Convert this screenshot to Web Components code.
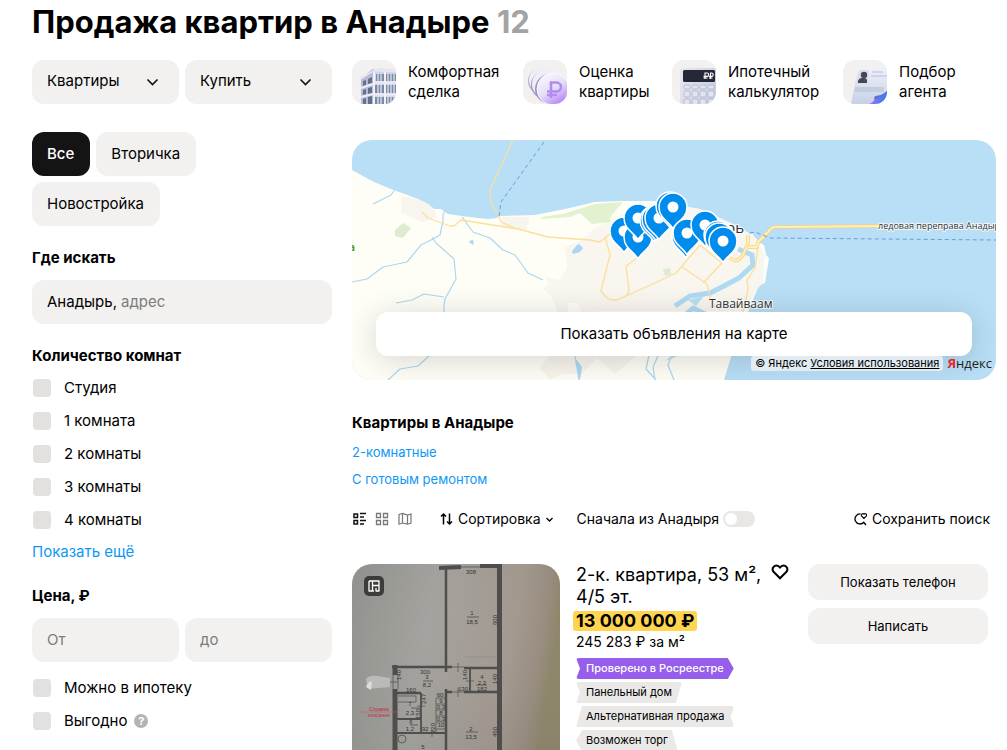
<!DOCTYPE html>
<html lang="ru">
<head>
<meta charset="utf-8">
<meta name="viewport" content="width=device-width, initial-scale=1">
<title>Продажа квартир в Анадыре</title>
<style>
  html, body {
    margin: 0;
    height: 100%;
    overflow: hidden;
    background: #fff;
  }
  body {
    --pill: #f2f1f0;
    --link: #0e98f5;
    --muted: #7c7c7c;
    color: #000;
    font: 15px/20px Inter, "Liberation Sans", sans-serif;
  }
</style>
</head>
<body>
<listing-page count="12">
  <span slot="title">Продажа квартир в Анадыре</span>
  <filter-panel slot="filters"></filter-panel>
  <service-link slot="services" icon="house">Комфортная сделка</service-link>
  <service-link slot="services" icon="coins">Оценка квартиры</service-link>
  <service-link slot="services" icon="calc">Ипотечный калькулятор</service-link>
  <service-link slot="services" icon="agent">Подбор агента</service-link>
  <map-preview>Показать объявления на карте</map-preview>
  <quick-links heading="Квартиры в Анадыре">
    <a href="#2k">2-комнатные</a>
    <a href="#remont">С готовым ремонтом</a>
  </quick-links>
  <results-toolbar></results-toolbar>
  <offer-card>
    <floor-plan slot="photo"></floor-plan>
    <span slot="title">2-к. квартира, 53&nbsp;м², 4/5&nbsp;эт.</span>
    <span slot="price">13&nbsp;000&nbsp;000&nbsp;₽</span>
    <span slot="unit">245&nbsp;283 ₽ за м²</span>
    <offer-tag slot="tags" shape="arrow">Проверено в Росреестре</offer-tag>
    <offer-tag slot="tags" shape="slant">Панельный дом</offer-tag>
    <offer-tag slot="tags" shape="ribbon">Альтернативная продажа</offer-tag>
    <offer-tag slot="tags" shape="point">Возможен торг</offer-tag>
  </offer-card>
</listing-page>

<script>
'use strict';

/** Styles that every shadow root starts with */
const BASE = `
  * { box-sizing: border-box; }
  button, input, select {
    margin: 0;
    padding: 0;
    border: 0;
    background: none;
    color: inherit;
    font: inherit;
  }
  button, select { cursor: pointer; }
  svg { display: block; flex: none; }
  a { color: inherit; text-decoration: none; }
`;

/**
 * Base class: opens the shadow root and renders once
 */
class UiElement extends HTMLElement {
  constructor() {
    super();
    this.root = this.attachShadow({mode: 'open'});
  }
  connectedCallback() {
    if (this.root.childNodes.length) return;
    this.root.innerHTML = `<style>${BASE}${this.styles}</style>${this.template}`;
  }
}

/**
 * Page frame: title, filters column, main column
 */
customElements.define('listing-page', class extends UiElement {
  get styles() {
    return `
      :host { display: block; padding: 2px 11px 0 32px; }
      h1 { margin: 0 0 18px; font-size: 31px; line-height: 40px; font-weight: 700; }
      h1 small { color: #a3a3a3; font-size: inherit; }
      .layout { display: grid; grid-template-columns: 300px minmax(0, 1fr); gap: 20px; align-items: start; }
      .services { display: grid; grid-template-columns: 171fr 149fr 171fr 153fr; margin-bottom: 36px; }
    `;
  }
  get template() {
    return `
      <h1><slot name="title"></slot> <small>${this.getAttribute('count')}</small></h1>
      <div class="layout">
        <aside><slot name="filters"></slot></aside>
        <main>
          <nav class="services"><slot name="services"></slot></nav>
          <slot></slot>
        </main>
      </div>`;
  }
});

/**
 * Drop-down in a rounded grey box
 */
customElements.define('pill-select', class extends UiElement {
  get styles() {
    return `
      :host { display: grid; flex: 1; min-width: 0; align-items: center; }
      select, svg { grid-area: 1 / 1; }
      select {
        height: 44px;
        padding: 0 40px 2px 15px;
        border-radius: 12px;
        background: var(--pill);
        appearance: none;
      }
      svg { justify-self: end; margin-right: 20px; pointer-events: none; }
    `;
  }
  get template() {
    const options = this.getAttribute('options').split(',');
    return `
      <select aria-label="${this.getAttribute('label')}">
        ${options.map(text => `<option>${text}</option>`).join('')}
      </select>
      <svg width="13" height="8" viewBox="0 0 13 8" fill="none" stroke="#111" stroke-width="1.6">
        <path d="M1.5 1.5l5 5 5-5"/>
      </svg>`;
  }
});

/**
 * Tick box with its label
 */
customElements.define('filter-check', class extends UiElement {
  get styles() {
    return `
      :host { display: flex; align-items: center; gap: 7px; }
      label { display: flex; align-items: center; gap: 13px; line-height: 24px; }
      input { width: 18px; height: 18px; margin-left: 1px; border-radius: 4px; background: #e2e1e0; appearance: none; }
      input:checked { background: var(--link); }
    `;
  }
  get template() {
    return `<label><input type="checkbox"><span><slot></slot></span></label><slot name="hint"></slot>`;
  }
});

/**
 * Left column with all the filters
 */
customElements.define('filter-panel', class extends UiElement {
  get styles() {
    return `
      :host { display: flex; flex-direction: column; gap: 20px; }
      .row { display: flex; flex-wrap: wrap; gap: 6px; }
      .kinds { margin: 8px 60px 0 0; }
      .kinds button { height: 44px; padding: 0 16px 0 15px; border-radius: 12px; background: var(--pill); }
      .kinds button[aria-pressed=true] { background: #141414; color: #fff; font-weight: 500; }
      h2, .title { display: block; margin: 0 0 10px; font-size: 15px; line-height: 24px; font-weight: 700; }
      .rooms .title { margin-bottom: 8px; }
      .field {
        display: flex;
        align-items: center;
        flex: 1;
        gap: 4px;
        min-width: 0;
        height: 44px;
        padding: 0 15px;
        border-radius: 12px;
        background: var(--pill);
      }
      .field input { flex: 1; min-width: 0; outline: 0; }
      ::placeholder { color: var(--muted); opacity: 1; }
      .checks { display: grid; gap: 9px; }
      .more { display: block; margin-top: 8px; color: var(--link); line-height: 24px; }
      .price .checks { margin-top: 14px; }
      .hint {
        width: 14px;
        height: 14px;
        border-radius: 50%;
        background: #b4b4b4;
        color: #fff;
        font-size: 11px;
        line-height: 14px;
        font-weight: 700;
      }
    `;
  }
  get template() {
    return `
      <div class="row">
        <pill-select label="Тип недвижимости" options="Квартиры,Комнаты,Дома"></pill-select>
        <pill-select label="Тип сделки" options="Купить,Снять"></pill-select>
      </div>
      <div class="row kinds">
        <button type="button" aria-pressed="true">Все</button>
        <button type="button" aria-pressed="false">Вторичка</button>
        <button type="button" aria-pressed="false">Новостройка</button>
      </div>
      <section>
        <label class="title" for="place">Где искать</label>
        <div class="field"><span>Анадырь,</span><input id="place" placeholder="адрес"></div>
      </section>
      <section class="rooms">
        <h2 class="title">Количество комнат</h2>
        <div class="checks">
          <filter-check>Студия</filter-check>
          <filter-check>1 комната</filter-check>
          <filter-check>2 комнаты</filter-check>
          <filter-check>3 комнаты</filter-check>
          <filter-check>4 комнаты</filter-check>
        </div>
        <a class="more" href="#more">Показать ещё</a>
      </section>
      <section class="price">
        <h2>Цена, ₽</h2>
        <div class="row">
          <div class="field"><input aria-label="Цена от" placeholder="От"></div>
          <div class="field"><input aria-label="Цена до" placeholder="до"></div>
        </div>
        <div class="checks">
          <filter-check>Можно в ипотеку</filter-check>
          <filter-check>Выгодно<button slot="hint" class="hint" type="button">?</button></filter-check>
        </div>
      </section>`;
  }
});

/** Pictures of the service tiles, 44x44 */
const SERVICE_ICONS = {
  house: `
    <defs><linearGradient id="h" x1="0" x2="1"><stop stop-color="#d6d4ea"/><stop offset="1" stop-color="#c8d3e8"/></linearGradient></defs>
    <path d="M9 18l12-9 23 3v32H9z" fill="url(#h)"/>
    <path d="M9 18l12-9v35H9z" fill="#b9bbd6"/>
    <path d="M8 17l19-9.500 17 2v3l-22-1-13 8z" fill="#e6e5f1"/>
    <path d="M11 21l3-1v5l-3 1zm5-2l4-2v6l-4 1zM11 30l3-1v5l-3 1zm5-2l4-1v6l-4 1zM11 39l3-1v6h-3zm5-2l4-1v8h-4z" fill="#62718c"/>
    <path d="M24 14h8v7h-8zm10 0h10v7H34zM23 25h9v8h-9zm11 0h10v8H34zM23 37h9v7h-9zm11 0h10v7H34z" fill="#7b8ba4"/>
    <path d="M26 14v30M29 14v30M36 14v30M39 14v30M42 14v30" stroke="#dfe3ef" stroke-width="1.300"/>
    <path d="M22 12v32M33 12v32" stroke="#f1f1f8" stroke-width="2"/>
    <path d="M21 22.500h23M21 34.500h23M9 28l12-4M9 37l12-3" stroke="#eeedf7" stroke-width="2.200"/>`,
  coins: `
    <defs><linearGradient id="c" x1="0" y1="0" x2=".6" y2="1"><stop stop-color="#fff"/><stop offset=".6" stop-color="#e4dcf6"/><stop offset="1" stop-color="#b98af5"/></linearGradient></defs>
    <circle cx="18" cy="21" r="13" fill="#b9add3"/>
    <circle cx="19" cy="20" r="13" fill="#efedf6"/>
    <circle cx="22" cy="25" r="14" fill="#a497c6"/>
    <circle cx="23" cy="24" r="14" fill="#efedf6"/>
    <circle cx="27" cy="29" r="15" fill="#9d8bc4"/>
    <circle cx="30" cy="29" r="16" fill="url(#c)" stroke="#faf8ff"/>
    <path d="M28 38V22.500h5.500a4.500 4.500 0 0 1 0 9H24M24 35h10" fill="none" stroke="#b38bef" stroke-width="2.600"/>`,
  calc: `
    <defs><linearGradient id="k" x1="0" y1="0" x2="1" y2=".5"><stop stop-color="#e9e9f3"/><stop offset="1" stop-color="#c4cce5"/></linearGradient></defs>
    <rect x="8" y="8" width="40" height="42" rx="3" fill="url(#k)"/>
    <rect x="11" y="10" width="32" height="12" rx="1.500" fill="#252735"/>
    <path d="M33 19v-6h2a1.700 1.700 0 0 1 0 3.400h-3.500M31.500 18h4M38.500 19v-6h1a1.700 1.700 0 0 1 0 3.400H37M37 18h3.500" fill="none" stroke="#fff" stroke-width="1.100"/>
    <g fill="#e3e4ef" stroke="#b0b3ca" stroke-width=".8">
      <rect x="12" y="25" width="6" height="4" rx="1.500"/><rect x="20" y="25" width="6" height="4" rx="1.500"/><rect x="28" y="25" width="6" height="4" rx="1.500"/><rect x="36" y="25" width="6" height="4" rx="1.500"/>
      <rect x="12" y="31" width="6" height="6" rx="1.500"/><rect x="20" y="31" width="6" height="6" rx="1.500"/><rect x="28" y="31" width="6" height="6" rx="1.500"/><rect x="36" y="31" width="6" height="6" rx="1.500"/>
      <rect x="12" y="39" width="6" height="6" rx="1.500"/><rect x="20" y="39" width="6" height="6" rx="1.500"/><rect x="28" y="39" width="6" height="6" rx="1.500"/><rect x="36" y="39" width="6" height="6" rx="1.500"/>
    </g>`,
  agent: `
    <defs>
      <linearGradient id="a" x1="0" y1="0" x2="0" y2="1"><stop stop-color="#f0f1f8"/><stop offset="1" stop-color="#c7d0e8"/></linearGradient>
      <linearGradient id="b" x1="0" x2="1"><stop stop-color="#a374f5"/><stop offset="1" stop-color="#2f7fe0"/></linearGradient>
    </defs>
    <path d="M15 8h30v36H8z" fill="url(#a)"/>
    <path d="M16 10h10l-1.500 14H13z" fill="#dcddea"/>
    <circle cx="21" cy="15" r="3.200" fill="#454858"/>
    <path d="M15 23v-2q1-3 4-3h2q3 0 3 3v2z" fill="#454858"/>
    <path d="M29 12h11M28 16h16" stroke="#c6cce2" stroke-width="1.600"/>
    <path d="M12 27h29l-.5 5H11z" fill="#c2cde0"/>
    <path d="M44 31v13H26q6-2 6-8 7 0 12-5z" fill="url(#b)"/>
    <path d="M32 36q7 0 12-5v2q-6 6-13 6z" fill="#5b73e0"/>`
};

/**
 * Picture tile with a two-line caption
 */
customElements.define('service-link', class extends UiElement {
  get styles() {
    return `
      :host { display: block; }
      a { display: flex; align-items: center; gap: 12px; }
      svg { border-radius: 12px; background: var(--pill); }
      span { width: min-content; }
    `;
  }
  get template() {
    return `
      <a href="#service">
        <svg width="44" height="44" viewBox="0 0 44 44">${SERVICE_ICONS[this.getAttribute('icon')]}</svg>
        <span><slot></slot></span>
      </a>`;
  }
});

/** Centres of the pins, in drawing order */
const PINS = [
  [272, 91], [286, 97], [286, 78], [302, 80], [304, 79], [307, 78], [318, 66], [321, 67],
  [334, 96], [335, 93], [353, 85], [366, 95], [367, 97], [371, 101]
];

/**
 * Map with pins and the wide button over it
 */
customElements.define('map-preview', class extends UiElement {
  get styles() {
    return `
      :host { display: block; position: relative; height: 240px; border-radius: 20px; overflow: hidden; background: #b8dff6; }
      svg { width: 100%; height: 100%; }
      text { font-family: "Open Sans", sans-serif; fill: #333; stroke: #fff; stroke-width: 2px; stroke-opacity: .8; paint-order: stroke; }
      button {
        position: absolute;
        left: 24px;
        right: 24px;
        bottom: 24px;
        height: 44px;
        border-radius: 12px;
        background: #fff;
        box-shadow: 0 4px 32px rgba(0, 0, 0, .16);
      }
      .copyright { position: absolute; right: 4px; bottom: 9px; display: flex; align-items: center; gap: 4px; }
      .terms { padding: 0 4px; border-radius: 3px; background: rgba(235, 240, 245, .85); font-size: 11px; line-height: 15px; }
      .terms a { text-decoration: underline; }
      .logo { font: 13px/15px "Open Sans", sans-serif; color: #222; }
      .logo b { color: #e5252b; }
    `;
  }
  get template() {
    const pins = PINS.map(([x, y]) => `<use href="#pin" x="${x}" y="${y}"/>`).join('');
    return `
      <svg viewBox="0 0 644 240" preserveAspectRatio="xMidYMid slice" fill="none" stroke-linejoin="round">
        <defs>
          <g id="pin">
            <path d="M0 22C-3 15-14 12-14 0a14 14 0 1 1 28 0C14 12 3 15 0 22z" fill="#008cec" stroke="#fff" stroke-width="1.500"/>
            <circle r="5.500" fill="#fff"/>
          </g>
        </defs>
        <path d="M0 30l20 11 21 9 12 4 13 5 10 5 6 5h7l7 5 14 2 16 2 10 1 9-1 2-2 36-1 30-6 30-7 27-1h33l45 8 38 18 11 10 3-4 6 9 6 3 2 10 3 3-4 25-6 2-11 27-17 45-7 23H0z" fill="#fefef6"/>
        <path d="M50 56l16 3 10 5 6 5 3 8-14 5-22-9zM150 77h28l-4 14-24-4z" fill="#f8f4ee"/>
        <path d="M213 107l17-7 10-10 30-16 35-10 43 5 40 18 17 12 8 16-2 28-8 8-10 20H205l-5-14-9-8 6-5-4-7 14 3 8-12z" fill="#f9f5ef"/>
        <path d="M205 170l90 4-4 36-28 24-18-16-15 16h-20l-12 6-10-12 12-16z" fill="#f6f2eb" opacity=".8"/>
        <path d="M217 163h9l5 14h-16z" fill="#fefef6"/>
        <path d="M189 77l22-3 32-10 28-2-12 14-1 6-18 2-12-11-10 4-28 2z" fill="#e2f2cf"/>
        <path d="M43 90l8-7 8 5-8 10-8-2zM311 129l7-1 1 7-6 1z" fill="#deebd0"/>
        <g stroke="#abd7f1" stroke-width="1.200">
          <path d="M21 64l18-9 3-4M0 142l15-3 16-12 24-5 14-17 12-6 7-4 3-14 0-7 4-5"/>
          <path d="M80 97l4 6 18 16 2 20-11 20-1 7v20M44 163l16-3 12-6 20 3M110 77l11 15 17 6 13 12 12 5 13 18 15 7M36 240l12-11 18-3 12-11M223 216l4 24M297 215l-3 14 10 11M306 216l-5 11 2 13M320 215l-4 10 6 15"/>
        </g>
        <path d="M220 111l5-6 2-1 4 4-3 4-7 2zM117 101l4-1 1 5-4-2zM223 218l7 9-2 14z" fill="#a9d7f3"/>
        <path d="M386 109l14 6 1 10-14 13-17 9-12 6-20 3-15 10M323 185l18-17 12 6-16 12" stroke="#aedaf4" stroke-width="5"/>
        <path d="M336 160l16-4-8 10zM328 215l-15 6 10-8z" fill="#b8dff6"/>
        <g stroke="#fbdf9c" stroke-width="1.300">
          <path d="M161 0l-23 50 1 13 8 13 2 6 16 7M70 72l6 6 22 8h4l7-6 57 9 30 8 42 3 10 2 5-4 8-7"/>
          <path d="M253 97l5 18-9 36 6 7 5 2h5l40-18 19-9 24-28 22 18-19 20M285 118l-11 8 3 24-2 5M330 127l25 17 3 14 5 9M320 94l8 3M406 107l-3 21-8 12 1 10-5 22"/>
        </g>
        <path d="M378 118q7 6 13-3l5-12v-8M396 107h9l1-5 14-14q3-2 10-1l100-1" stroke="#f5d27e" stroke-width="3.500"/>
        <path d="M378 118q7 6 13-3l5-12v-8M396 107h9l1-5 14-14q3-2 10-1l100-1" stroke="#fff0b5" stroke-width="2"/>
        <path d="M192 2l-43 60-2 14M398 93l5-1 15 6 226 2" stroke="#689cdc" stroke-width="1" stroke-dasharray="4 3"/>
        <text x="374" y="93" font-size="15">рь</text>
        <text x="357" y="168" font-size="12">Тавайваам</text>
        <text x="526" y="89" font-size="9">ледовая переправа Анадырь</text>
        <text x="-3" y="111" font-size="10" font-weight="700" style="fill:#4c9a26">а</text>
        ${pins}
      </svg>
      <button type="button"><slot></slot></button>
      <div class="copyright">
        <span class="terms">© Яндекс <a href="#terms">Условия использования</a></span>
        <span class="logo"><b>Я</b>ндекс</span>
      </div>`;
  }
});

/**
 * Heading with a short list of links
 */
customElements.define('quick-links', class extends UiElement {
  get styles() {
    return `
      :host { display: block; margin-top: 32px; }
      h2 { margin: 0 0 8px; font-size: 15px; line-height: 22px; font-weight: 700; }
      div { display: flex; flex-direction: column; align-items: flex-start; gap: 7px; font-size: 13px; }
      ::slotted(a) { color: var(--link); text-decoration: none; }
    `;
  }
  get template() {
    return `<h2>${this.getAttribute('heading')}</h2><div><slot></slot></div>`;
  }
});

/**
 * View switch, sorting and saved search
 */
customElements.define('results-toolbar', class extends UiElement {
  get styles() {
    return `
      :host { display: flex; align-items: center; margin-top: 20px; padding-right: 6px; height: 20px; white-space: nowrap; }
      button { display: flex; align-items: center; gap: 5px; }
      .views { display: flex; gap: 9px; margin-right: 28px; }
      .views button { color: #777; }
      .views button[aria-pressed=true] { color: #111; }
      label { display: flex; align-items: center; gap: 4px; margin-left: 24px; font-size: 14px; }
      .sort, .save { font-size: 14px; }
      .save { margin-left: auto; }
      input { display: flex; width: 32px; height: 16px; padding: 2px; border-radius: 8px; background: #e8e7e6; appearance: none; }
      input::before { content: ""; width: 12px; height: 12px; border-radius: 50%; background: #fff; }
      input:checked { justify-content: flex-end; background: var(--link); }
    `;
  }
  get template() {
    return `
      <div class="views">
        <button type="button" aria-pressed="true" aria-label="Списком">
          <svg width="14" height="14" viewBox="0 0 14 14" fill="none" stroke="currentColor" stroke-width="1.500">
            <path d="M2 2h3.500v3.500H2zM2 8.500h3.500V12H2zM8 1.500h6M8 5h4M8 8.500h6M8 12h4"/>
          </svg>
        </button>
        <button type="button" aria-pressed="false" aria-label="Плиткой">
          <svg width="14" height="14" viewBox="0 0 14 14" fill="none" stroke="currentColor" stroke-width="1.300">
            <path d="M1.500 1.500h4v4h-4zM8.500 1.500h4v4h-4zM1.500 8.500h4v4h-4zM8.500 8.500h4v4h-4z"/>
          </svg>
        </button>
        <button type="button" aria-pressed="false" aria-label="На карте">
          <svg width="14" height="14" viewBox="0 0 14 14" fill="none" stroke="currentColor" stroke-width="1.200">
            <path d="M1 2.500l3.500-1 5 1.500 3.500-1v9l-3.500 1.200L4.500 11 1 12.200zM4.500 1.500V11M9.500 3v9"/>
          </svg>
        </button>
      </div>
      <button class="sort" type="button">
        <svg width="13" height="14" viewBox="0 0 13 14" fill="none" stroke="#000" stroke-width="1.500">
          <path d="M3.500 12.500V2M1 4.500L3.500 2 6 4.500M9.500 1.500V12M7 9.500l2.500 2.500 2.500-2.500"/>
        </svg>
        Сортировка
        <svg width="7" height="5" viewBox="0 0 7 5" fill="none" stroke="#000" stroke-width="1.300"><path d="M.5 1l3 3 3-3"/></svg>
      </button>
      <label>Сначала из Анадыря <input type="checkbox" role="switch"></label>
      <button class="save" type="button">
        <svg width="13" height="14" viewBox="0 0 13 14" fill="none" stroke="#000" stroke-width="1.300">
          <path d="M6.500 2a5 5 0 1 0 3.500 8M9.500 10l2.500 3"/>
          <path d="M10 6.500L7.800 4.200a1.300 1.300 0 0 1 2.200-2 1.300 1.300 0 0 1 2.200 2z" stroke-width="1.100"/>
        </svg>
        Сохранить поиск
      </button>`;
  }
});

/**
 * Photographed floor plan
 */
customElements.define('floor-plan', class extends UiElement {
  get styles() {
    return `
      :host { display: block; }
      svg { width: 100%; }
      text { font: 6px "Liberation Sans", sans-serif; fill: #333; text-anchor: middle; }
      .red { font-size: 5px; fill: #c03048; }
    `;
  }
  get template() {
    return `
      <svg viewBox="0 0 208 260">
        <defs>
          <linearGradient id="paper" x1="0" y1="0" x2="1" y2=".2">
            <stop stop-color="#8f918c"/><stop offset=".4" stop-color="#a3a19d"/><stop offset=".8" stop-color="#a1978d"/><stop offset=".93" stop-color="#978b7e"/><stop offset="1" stop-color="#8c8467"/>
          </linearGradient>
          <linearGradient id="shade" x1="0" y1="0" x2="0" y2="1">
            <stop stop-color="#fff" stop-opacity="0"/><stop offset="1" stop-color="#444" stop-opacity=".15"/>
          </linearGradient>
        </defs>
        <path d="M0 0h208v260H0z" fill="url(#paper)"/>
        <path d="M0 0h208v260H0z" fill="url(#shade)"/>
        <g fill="none" stroke="#4f4e4c">
          <path d="M147.500 0v260M43 101v10M43 125v135" stroke-width="5"/>
          <path d="M87 4l22-1M128 2h22" stroke-width="4"/>
          <path d="M94 4v104M40 103h60M112 104h34M95 128h5M112 128h34M94 125v135M45 129h24" stroke-width="2.500"/>
          <path d="M118 104v24M69 129v26M45 155h24v14M45 169h49" stroke-width="1.800"/>
          <path d="M100 103h12M100 128h12M106 99v9M106 124v9M41 111v14M46 111v14M38 118h8M109 3h19M114 117h8M84 134h10M84 140h10M84 146h10M84 152h10M84 158h10M84 165h10M84 134v35M46 132h18v6H46M65 142h8M80 165v8" stroke-width=".7"/>
          <circle cx="50" cy="175" r="4" stroke-width=".8"/>
          <path d="M115 53h12M71 117h10M124 121h11M59 144h10M58 161h8M114 168h12" stroke-width=".8"/>
          <path d="M113 93h31" stroke="#8b8782" stroke-width=".6"/>
        </g>
        <path d="M14 115q3-4 12-3l12 2v9l-22 2z" fill="#b9bab9"/>
        <path d="M14 123q3-7 6-5l-1 8z" fill="#deded9"/>
        <text x="119" y="10">308</text><text x="120" y="51">1</text><text x="120" y="60">18,5</text>
        <text transform="translate(145 56) rotate(-90)">600</text>
        <text x="73" y="110">300</text><text x="75" y="115">3</text><text x="75" y="123">8,2</text>
        <text x="59" y="128">160</text><text x="130" y="115">4</text><text x="130" y="121">2,3</text>
        <text x="130" y="127">182</text><text x="111" y="127">130</text>
        <text transform="translate(49 111) rotate(-90)">140</text>
        <text transform="translate(115 111) rotate(-90)">140</text>
        <text transform="translate(145 115) rotate(-90)">140</text>
        <text transform="translate(74 135) rotate(-90)">247</text>
        <text transform="translate(68 150) rotate(-90)">150</text>
        <text x="58" y="142">7</text><text x="58" y="151">2,3</text>
        <text x="59" y="160">6</text><text x="58" y="167">1,2</text><text x="73" y="167">92</text>
        <text x="88" y="133">60</text><text x="89" y="139">9</text><text x="89" y="145">0,3</text>
        <text x="89" y="151">8</text><text x="89" y="157">0,3</text><text x="89" y="163">10</text>
        <text transform="translate(83 164) rotate(-90)">220</text>
        <text x="119" y="167">2</text><text x="119" y="175">13,5</text>
        <text transform="translate(145 168) rotate(-90)">450</text>
        <text x="71" y="185">5</text>
        <text class="red" x="27" y="147">Справка</text><text class="red" x="27" y="153">описание</text>
        <path d="M8 148h38" stroke="#c06070" stroke-width=".6"/>
      </svg>`;
  }
});

/** Outlines of the tags */
const TAG_SHAPES = {
  arrow: 'polygon(0 0, calc(100% - 6px) 0, 100% 50%, calc(100% - 6px) 100%, 0 100%, 4px 50%)',
  slant: 'polygon(0 0, 100% 0, calc(100% - 6px) 100%, 0 100%, 4px 50%)',
  ribbon: 'polygon(6px 0, 100% 0, calc(100% - 4px) 50%, 100% 100%, 0 100%)',
  point: 'polygon(6px 0, calc(100% - 6px) 0, 100% 100%, 6px 100%, 0 50%)'
};

/**
 * Small label cut to one of TAG_SHAPES
 */
customElements.define('offer-tag', class extends UiElement {
  get styles() {
    return `
      :host {
        display: block;
        padding: 0 10px;
        border-radius: 3px;
        background: #eae9e8;
        clip-path: ${TAG_SHAPES[this.getAttribute('shape')]};
        font-size: 11px;
        line-height: 21px;
        white-space: nowrap;
      }
      :host([shape=arrow]) { background: #965eeb; color: #fff; font-weight: 500; }
    `;
  }
  get template() {
    return `<slot></slot>`;
  }
});

/**
 * One offer of the list
 */
customElements.define('offer-card', class extends UiElement {
  get styles() {
    return `
      :host {
        display: grid;
        grid-template-columns: 208px minmax(0, 1fr) 180px;
        gap: 16px;
        align-items: start;
        margin-top: 35px;
        padding-right: 8px;
      }
      .photo { position: relative; border-radius: 20px; overflow: hidden; }
      .badge { position: absolute; left: 12px; top: 12px; padding: 4px; border-radius: 5px; background: #3c3c3a; }
      .head { display: flex; align-items: flex-start; justify-content: space-between; gap: 8px; padding-right: 2px; }
      h3 { margin: 0; font-size: 18px; line-height: 22px; font-weight: 400; }
      .price {
        width: fit-content;
        margin: 3px 0 0 -3px;
        padding: 0 3px;
        border-radius: 3px;
        background: #ffd54f;
        font-size: 18px;
        line-height: 20px;
        font-weight: 700;
      }
      .unit { font-size: 14px; line-height: 21px; }
      .tags { display: flex; flex-direction: column; align-items: flex-start; gap: 3px; margin-top: 6px; }
      .actions { display: grid; gap: 8px; }
      .actions button { height: 36px; border-radius: 12px; background: var(--pill); font-size: 13px; }
    `;
  }
  get template() {
    return `
      <div class="photo">
        <slot name="photo"></slot>
        <svg class="badge" width="20" height="20" viewBox="0 0 12 12" fill="none" stroke="#fff" stroke-width="1.300">
          <path d="M1 1h10v10H8M6 11H1V1M4.500 1v10M4.500 5.500H11M8 8v3.500"/>
        </svg>
      </div>
      <div>
        <div class="head">
          <h3><slot name="title"></slot></h3>
          <button type="button" aria-label="В избранное">
            <svg width="20" height="16" viewBox="0 0 20 18" fill="none" stroke="#000" stroke-width="2.300">
              <path d="M10 16L3 9a4 4 0 0 1 0-6 4 4 0 0 1 6 0l1 1 1-1a4 4 0 0 1 6 0 4 4 0 0 1 0 6z"/>
            </svg>
          </button>
        </div>
        <div class="price"><slot name="price"></slot></div>
        <div class="unit"><slot name="unit"></slot></div>
        <div class="tags"><slot name="tags"></slot></div>
      </div>
      <div class="actions">
        <button type="button">Показать телефон</button>
        <button type="button">Написать</button>
      </div>`;
  }
});
</script>
</body>
</html>
